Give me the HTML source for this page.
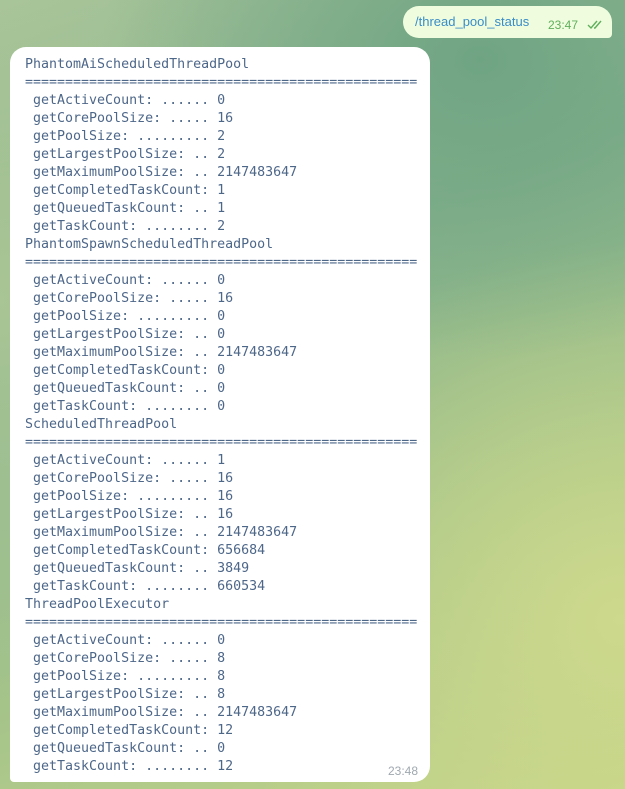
<!DOCTYPE html>
<html><head><meta charset="utf-8"><style>
html,body{margin:0;padding:0;width:625px;height:789px;overflow:hidden}
body{position:relative;background:
radial-gradient(ellipse 380px 300px at 480px 60px,#6fa483 0%,rgba(111,164,131,0) 100%),
radial-gradient(ellipse 400px 380px at 620px 620px,#cdd98c 0%,rgba(205,217,140,0) 100%),
radial-gradient(ellipse 300px 400px at 0px 300px,#a9c595 0%,rgba(169,197,149,0) 100%),
linear-gradient(160deg,#a8c49a 0%,#86b28c 35%,#a5c48a 70%,#c4d488 100%);font-family:"Liberation Sans",sans-serif}
.out{position:absolute;left:403px;top:6px;width:209px;height:32px;background:#effdde;border-radius:16px 16px 4px 16px}
.out .t{position:absolute;left:12px;top:8px;font-size:13px;color:#3a8cc8}
.out .tm{position:absolute;left:145px;top:12px;font-size:12px;color:#5faf5c}
.out svg{position:absolute;left:184px;top:14px}
.in{position:absolute;left:10px;top:47px;width:420px;height:735px;background:#fff;border-radius:16px 16px 16px 4px}
pre{position:absolute;left:15px;top:9px;margin:0;font-family:"DejaVu Sans Mono",monospace;font-size:13.3px;line-height:18px;color:#4d6789}
.in .tm{position:absolute;left:378px;top:717px;font-size:12px;color:#a0a8b0}
</style></head><body>
<div class="out"><span class="t">/thread_pool_status</span><span class="tm">23:47</span>
<svg width="18" height="10" viewBox="0 0 18 10"><path d="M1 5l3 3 6-7M7 8l1 0 6-7" fill="none" stroke="#5faf5c" stroke-width="1.4"/></svg></div>
<div class="in"><pre>PhantomAiScheduledThreadPool
=================================================
 getActiveCount: ...... 0
 getCorePoolSize: ..... 16
 getPoolSize: ......... 2
 getLargestPoolSize: .. 2
 getMaximumPoolSize: .. 2147483647
 getCompletedTaskCount: 1
 getQueuedTaskCount: .. 1
 getTaskCount: ........ 2
PhantomSpawnScheduledThreadPool
=================================================
 getActiveCount: ...... 0
 getCorePoolSize: ..... 16
 getPoolSize: ......... 0
 getLargestPoolSize: .. 0
 getMaximumPoolSize: .. 2147483647
 getCompletedTaskCount: 0
 getQueuedTaskCount: .. 0
 getTaskCount: ........ 0
ScheduledThreadPool
=================================================
 getActiveCount: ...... 1
 getCorePoolSize: ..... 16
 getPoolSize: ......... 16
 getLargestPoolSize: .. 16
 getMaximumPoolSize: .. 2147483647
 getCompletedTaskCount: 656684
 getQueuedTaskCount: .. 3849
 getTaskCount: ........ 660534
ThreadPoolExecutor
=================================================
 getActiveCount: ...... 0
 getCorePoolSize: ..... 8
 getPoolSize: ......... 8
 getLargestPoolSize: .. 8
 getMaximumPoolSize: .. 2147483647
 getCompletedTaskCount: 12
 getQueuedTaskCount: .. 0
 getTaskCount: ........ 12</pre><span class="tm">23:48</span></div>
</body></html>
